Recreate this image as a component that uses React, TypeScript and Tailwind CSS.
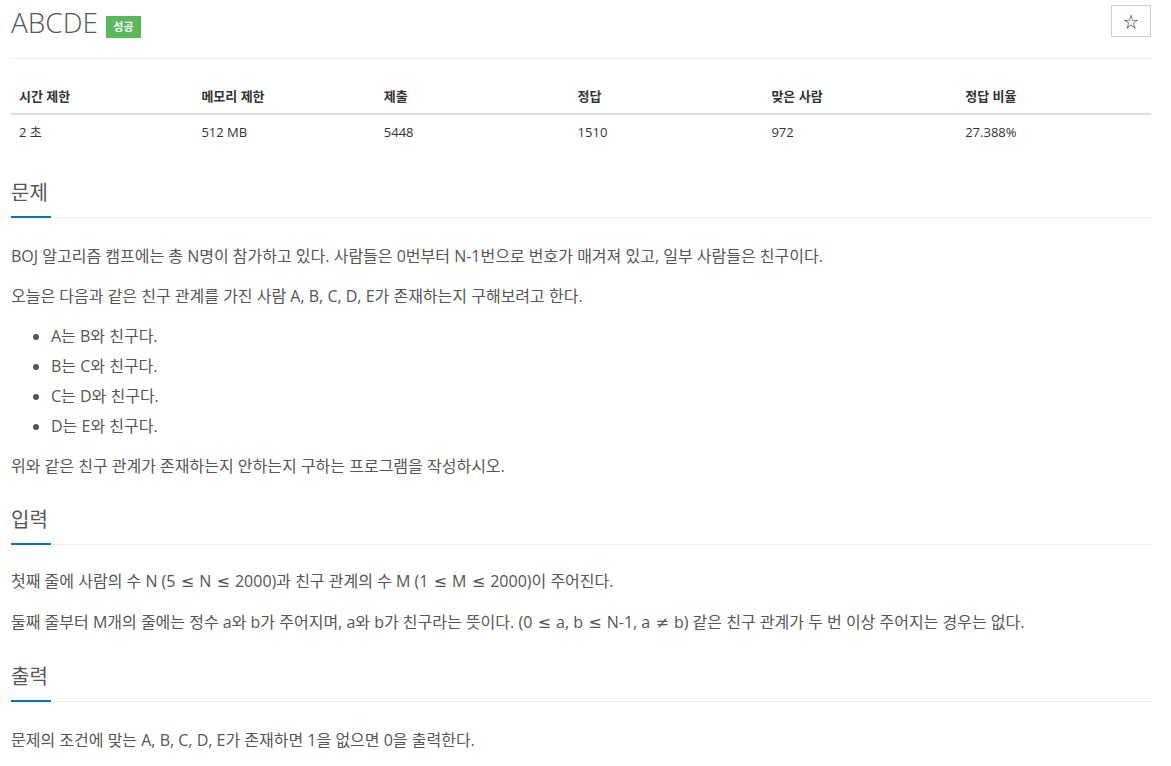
const font = { fontFamily: '"Open Sans", "Noto Sans CJK KR", sans-serif' }

function Headline({ title }: { title: string }) {
  return (
    <div className="border-b border-dotted border-[#dfe3e8]">
      <h2 className="inline-block -mb-px border-b-2 border-[#0076c0] pb-[9px] pr-[3px] text-[20px] leading-[28px] text-[#555]">
        {title}
      </h2>
    </div>
  )
}

// math symbols render wider in the original
function M({ c }: { c: string }) {
  return <span className="mx-[1px]" style={{ fontFamily: '"DejaVu Sans", sans-serif' }}>{c}</span>
}

const heads = ['시간 제한', '메모리 제한', '제출', '정답', '맞은 사람', '정답 비율']
const vals = ['2 초', '512 MB', '5448', '1510', '972', '27.388%']
const widths = ['w-[16%]', 'w-[16%]', 'w-[17%]', 'w-[17%]', 'w-[17%]', 'w-[17%]']

export default function App() {
  return (
    <div className="bg-white min-h-screen text-[#555]" style={font}>
      <div className="ml-[11px] w-[1140px] pt-[5px]">
        <div className="flex items-start justify-between">
          <div className="flex items-center">
            <h1 className="text-[28px] leading-[34px] font-light text-[#555]">ABCDE</h1>
            <span className="ml-[8px] mt-[10px] flex h-[22px] w-[35px] items-center justify-center bg-[#5cb85c] text-[11px] font-bold text-white">
              성공
            </span>
          </div>
          <button className="flex h-[32px] w-[40px] items-center justify-center border border-[#ccc] bg-white text-[15px] text-[#333]">
            ☆
          </button>
        </div>

        <hr className="mt-[19px] border-t border-[#eee]" />

        <table className="mt-[20px] w-full table-fixed text-[13px]">
          <thead>
            <tr className="border-b-2 border-[#ddd]">
              {heads.map((h, i) => (
                <th key={h} className={widths[i] + ' px-[8px] py-[8px] text-left leading-[18px] font-bold text-[#333]'}>
                  {h}
                </th>
              ))}
            </tr>
          </thead>
          <tbody>
            <tr>
              {vals.map(v => (
                <td key={v} className="px-[8px] py-[8px] leading-[18px] text-[#333]">
                  {v}
                </td>
              ))}
            </tr>
          </tbody>
        </table>

        <section className="mt-[30px]">
          <Headline title="문제" />
          <div className="mt-[23px] text-[16px] leading-[30px]">
            <p className="mb-[10px]">
              BOJ 알고리즘 캠프에는 총 N명이 참가하고 있다. 사람들은 0번부터 N-1번으로 번호가 매겨져 있고, 일부 사람들은 친구이다.
            </p>
            <p className="mb-[10px]">오늘은 다음과 같은 친구 관계를 가진 사람 A, B, C, D, E가 존재하는지 구해보려고 한다.</p>
            <ul className="mb-[10px] list-disc pl-[40px]">
              <li>A는 B와 친구다.</li>
              <li>B는 C와 친구다.</li>
              <li>C는 D와 친구다.</li>
              <li>D는 E와 친구다.</li>
            </ul>
            <p className="mb-[10px]">위와 같은 친구 관계가 존재하는지 안하는지 구하는 프로그램을 작성하시오.</p>
          </div>
        </section>

        <section className="mt-[25px]">
          <Headline title="입력" />
          <div className="mt-[21px] text-[16px] leading-[30px]">
            <p className="mb-[10px]">
              첫째 줄에 사람의 수 N (5 <M c="≤" /> N <M c="≤" /> 2000)과 친구 관계의 수 M (1 <M c="≤" /> M <M c="≤" /> 2000)이 주어진다.
            </p>
            <p className="mb-[10px]">
              둘째 줄부터 M개의 줄에는 정수 a와 b가 주어지며, a와 b가 친구라는 뜻이다. (0 <M c="≤" /> a, b <M c="≤" /> N-1, a <M c="≠" /> b) 같은 친구 관계가 두 번 이상 주어지는 경우는 없다.
            </p>
          </div>
        </section>

        <section className="mt-[25px]">
          <Headline title="출력" />
          <div className="mt-[23px] text-[16px] leading-[30px]">
            <p className="mb-[10px]">문제의 조건에 맞는 A, B, C, D, E가 존재하면 1을 없으면 0을 출력한다.</p>
          </div>
        </section>
      </div>
    </div>
  )
}
